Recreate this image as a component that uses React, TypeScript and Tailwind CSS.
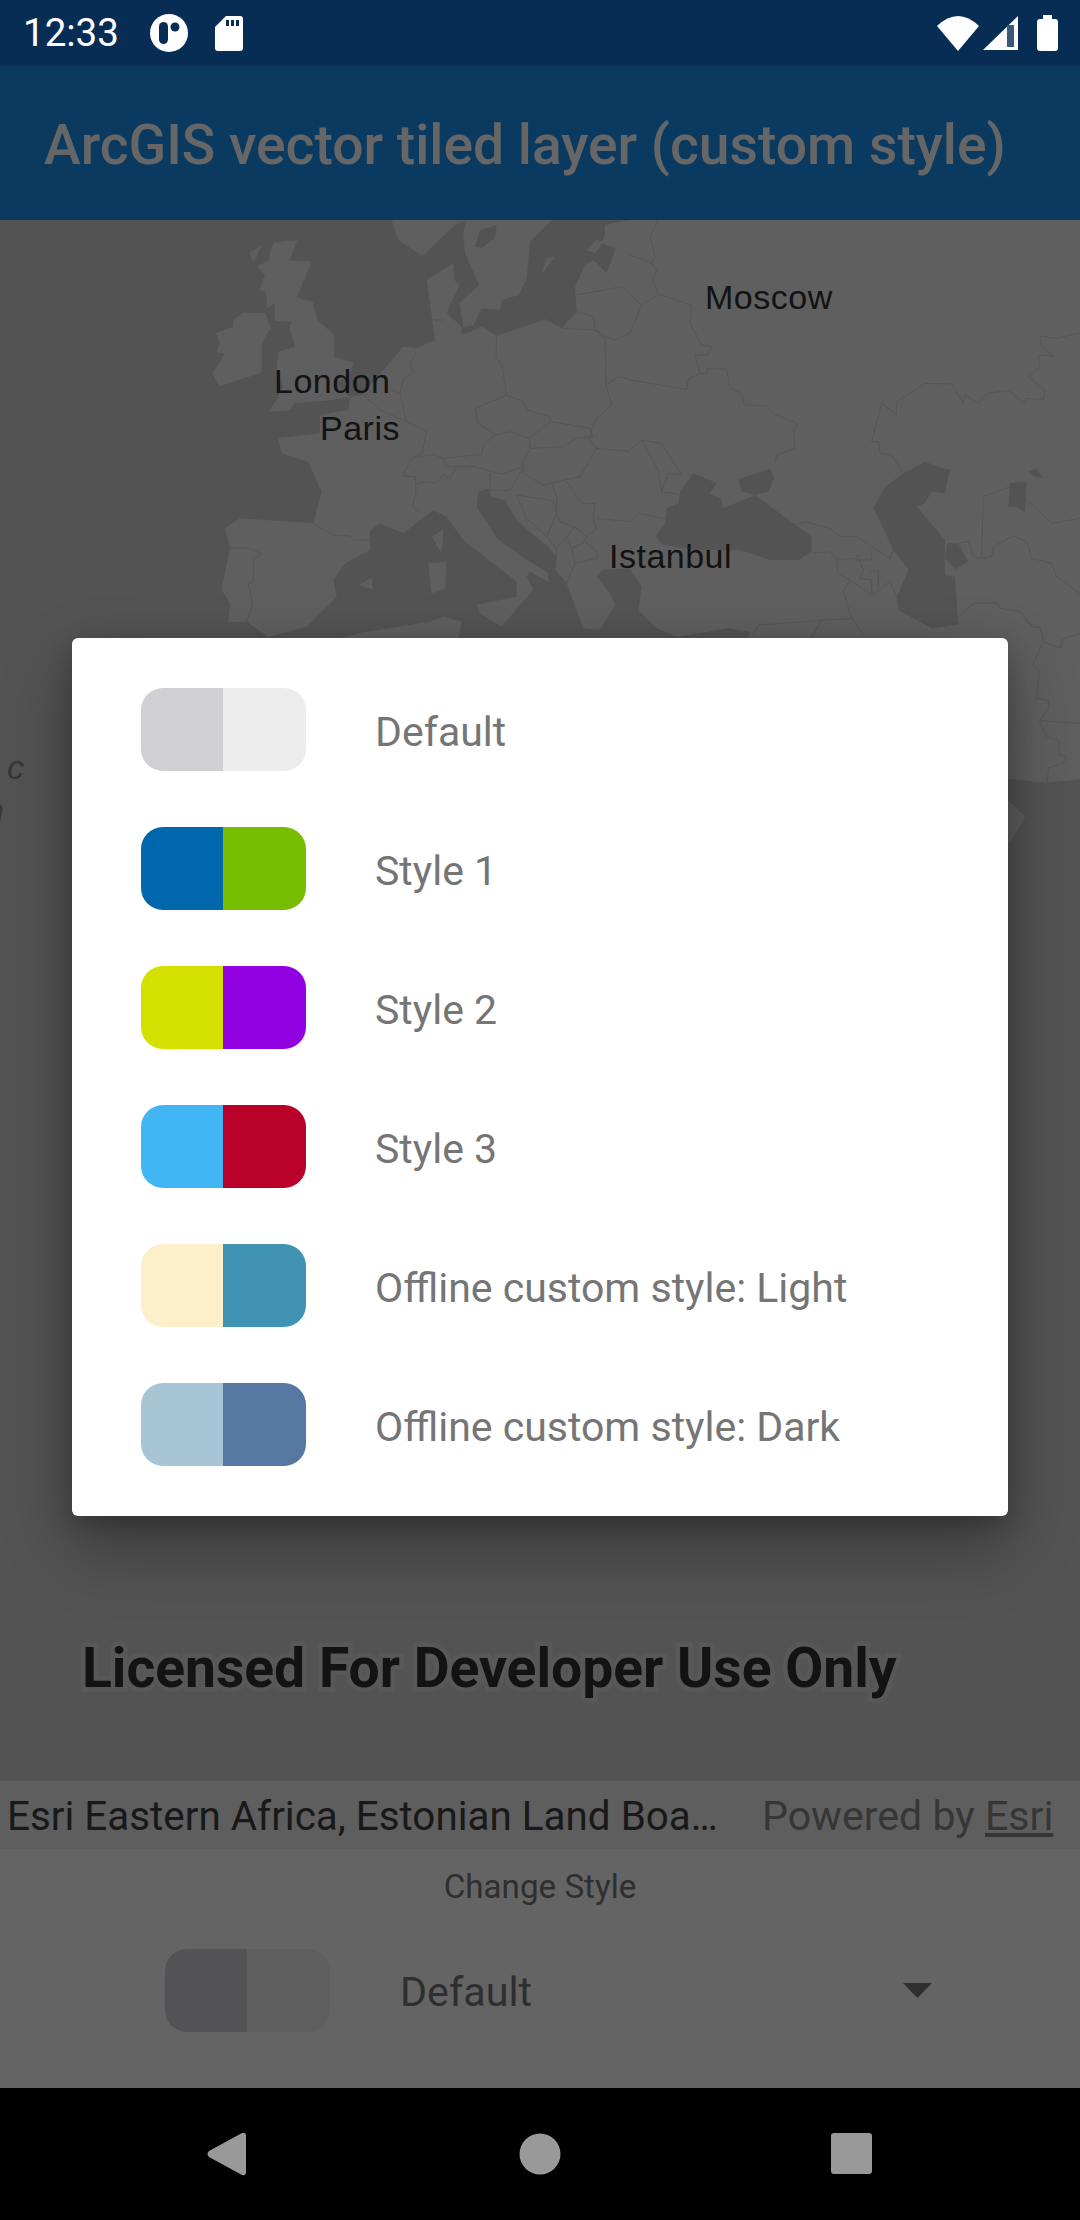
const LAND = "1275,15 1350,0 2700,0 2700,1678 2600,1688 2484,1676 2484,1300 1700,1300 1710,1235 1640,1225 1560,1240 1490,1250 1430,1225 1375,1170 1385,1100 1350,1045 1265,1050 1250,1070 1290,1120 1305,1155 1260,1230 1210,1225 1160,1090 1125,1050 1130,1010 1105,980 1060,945 1010,900 975,840 935,830 925,805 895,815 890,860 950,955 1040,1020 1105,1060 1105,1085 1050,1055 1040,1070 1060,1110 1015,1160 965,1220 900,1180 890,1155 1010,1130 1010,1085 850,960 800,890 760,870 670,940 600,910 570,930 570,990 495,1030 460,1080 470,1130 380,1220 265,1250 200,1205 145,1205 150,1150 125,1110 150,985 135,925 180,895 400,910 425,815 385,725 305,700 295,655 420,640 420,585 505,570 510,530 545,525 610,450 670,380 710,385 765,360 757,300 740,180 820,130 822,178 838,197 812,250 800,280 845,320 845,345 905,320 950,348 1095,298 1145,325 1190,275 1185,200 1215,135 1240,120 1280,160 1308,85 1262,70 1275,45";
const ISLANDS = [
  "160,300 190,278 255,280 272,325 245,370 245,458 118,498 97,460 135,402 108,395 120,370 108,340 160,320",
  "280,68 352,60 328,122 395,125 350,232 398,245 412,300 462,345 462,410 520,428 505,470 460,490 510,530 455,540 345,550 330,570 265,575 295,530 310,500 290,445 295,395 345,380 328,320 335,305 285,302 283,250 262,265 258,215 238,210 255,165 232,140 265,120",
  "207,100 245,75 222,125",
  "635,0 860,0 825,15 727,108 655,60",
  "860,0 1115,0 1050,65 1040,175 1015,225 965,240 960,270 905,265 880,315 850,320 838,250 898,195 855,100 850,40",
  "1085,160 1100,115 1125,110",
  "1220,90 1248,60 1270,65 1245,100",
  "755,950 790,930 785,1000",
  "745,1030 800,1025 795,1105 755,1120",
  "537,1095 575,1075 578,1108",
  "460,1300 480,1254 560,1235 750,1205 790,1190 845,1205 825,1300",
  "2484,1740 2535,1790 2490,1870 2450,1870 2450,1740",
];
const LAKES = ["885,80 900,30 950,15 945,55 905,85"];
const SEAS = [
  "190,760 262,790 238,820 272,835 280,865 375,825 545,950 545,995 505,1020 420,1020 330,990 200,990 100,975 75,950 105,910 110,865 145,850 150,815",
  "325,778 420,745 433,775 415,815 375,825 335,815",
  "885,725 925,740 960,750 945,820 905,815 885,850 860,860 945,960 945,1065 975,1070 985,1215 905,1225 805,1170 800,1130 835,1050 790,990 758,920 730,865 765,800 820,760",
  "950,970 985,970 1015,1025 975,1048 945,1015",
  "1140,790 1190,785 1185,880 1160,860 1135,860",
  "1195,755 1220,745 1240,775 1215,770",
];
const BORDERS_W = [
  "150,985 200,983 245,1000 220,1020 220,1085 205,1090 218,1155 200,1205",
  "400,912 460,945 510,948 525,960 570,960",
  "545,520 600,570 680,605 740,635 725,700 695,715 668,768 705,770 708,815 698,860 725,880",
  "695,715 760,703 790,715 905,703 910,675 945,645 990,635 1048,655 1050,685 1030,725 1028,740 965,762 880,740 800,740 790,715",
  "705,793 745,785 770,790 790,765 810,775 830,742",
  "710,395 690,435 700,458 668,480 660,520 680,605",
  "635,510 660,520",
  "755,300 790,300",
  "950,348 948,415 965,430 980,525 885,565 895,610 945,645",
  "980,525 1030,545 1040,570 1110,590 1112,605 1048,655",
  "1112,605 1230,625 1240,650 1190,655 1150,680 1050,685",
  "1145,325 1250,330 1275,360 1278,495 1295,555 1250,595 1235,630 1230,658 1250,685 1350,695",
  "1278,495 1315,470 1350,478",
  "1030,725 1030,760 1090,795 1200,770 1250,685",
  "930,760 930,810 990,812 1028,745",
  "1010,825 1120,842 1130,880 1100,950 1040,895 1010,825",
  "1090,795 1115,790 1130,830 1130,880 1140,905 1190,925 1220,950 1250,925 1240,900 1245,850 1205,850 1160,785",
  "1250,895 1350,905",
  "1100,950 1130,985 1160,950 1185,920 1220,950 1210,970 1175,985 1160,950",
  "1175,985 1185,1030 1250,1015 1255,1000 1215,965",
  "1130,985 1125,1050 1160,1090 1185,1030",
  "1190,225 1325,200 1350,220",
  "1245,325 1240,290 1190,275",
  "1250,330 1275,350 1305,360 1350,340",
];
const BORDERS_E = [
  "85,0 60,50 75,110 65,130 0,105",
  "65,130 80,150 68,180 85,222 35,255 0,340",
  "0,225 35,255",
  "85,222 185,255 180,310 215,375 245,380 230,405 195,405 210,460 230,462 232,447 290,447 300,505 335,520 342,555 410,557 430,580 505,612 490,630 495,685 440,705 435,730",
  "0,480 170,508 175,478 210,460",
  "0,690 35,660 95,670 155,765 115,760 95,815 85,750 35,660",
  "95,815 145,822",
  "0,905 25,880 105,897",
  "800,760 815,750 785,705 750,700 745,665 725,665 755,550 800,585 800,545 885,490 965,492 1000,550 1005,525 1045,550 1070,520 1135,512 1185,550 1190,535 1240,540 1245,510 1195,470 1230,440 1225,405 1270,408 1235,380 1230,348 1280,355 1350,338",
  "1055,1010 1060,830 1140,800",
  "1185,835 1265,910 1350,895",
  "985,970 1015,965 1030,1010 1055,1015 1085,1010 1090,980 1150,947 1190,965 1205,1015 1265,1030 1280,1070 1350,1120",
  "985,1190 1030,1150 1100,1148 1110,1165 1170,1175 1205,1220 1230,1220 1240,1260",
  "500,915 525,905 600,925 630,950 680,950 780,1015 790,990",
  "545,1000 600,995 620,1020 670,1015 675,1020 725,1020 720,985",
  "620,1020 625,1060 660,1080 725,1125 780,1085 800,1130",
  "660,1080 640,1115 665,1195 710,1260",
  "385,1215 665,1195 575,1200 540,1260",
  "360,1260 385,1215",
  "680,1005 700,1050 690,1075 725,1080 725,1125",
  "720,1055 745,1050 745,1100",
];
const BORDERS_R = [
  "135,0 160,20 182,25 190,65 240,85 250,55 300,40",
  "190,65 158,135 178,150 170,235 203,240 208,265 178,302 300,310",
  "178,302 200,350 237,362 237,405 258,407 250,430 207,443 200,488",
];

const LANDC = "#eeeeee";
const WATER = "#d0d0d2";
const LINE = "#d4d4d4";

function MapArt() {
  return (
    <svg viewBox="-540 0 3240 4683" className="absolute inset-0 h-full w-full" preserveAspectRatio="none">
      <rect x="-540" y="0" width="3240" height="4683" fill={WATER} />
      <polygon points={LAND} fill={LANDC} />
      {ISLANDS.map((p, i) => <polygon key={i} points={p} fill={LANDC} />)}
      {LAKES.map((p, i) => <polygon key={i} points={p} fill={WATER} />)}
      <g transform="translate(1350 0)">
        {SEAS.map((p, i) => <polygon key={i} points={p} fill={WATER} />)}
      </g>
      <g fill="none" stroke={LINE} strokeWidth="3">
        {BORDERS_W.map((p, i) => <polyline key={i} points={p} />)}
        <g transform="translate(1350 0)">
          {BORDERS_E.map((p, i) => <polyline key={i} points={p} />)}
        </g>
        <g transform="translate(2400 1200)">
          {BORDERS_R.map((p, i) => <polyline key={i} points={p} />)}
        </g>
      </g>
    </svg>
  );
}

function Swatch({ a, b }: { a: string; b: string }) {
  return (
    <div className="flex h-[83px] w-[165px] shrink-0 overflow-hidden rounded-[22px]">
      <div className="w-[82px]" style={{ backgroundColor: a }} />
      <div className="flex-1" style={{ backgroundColor: b }} />
    </div>
  );
}

const OPTIONS = [
  { label: "Default", a: "#d0d0d4", b: "#ececed" },
  { label: "Style 1", a: "#0067ac", b: "#77bd00" },
  { label: "Style 2", a: "#d3e000", b: "#9000e0" },
  { label: "Style 3", a: "#42b6f5", b: "#b90028" },
  { label: "Offline custom style: Light", a: "#fdefca", b: "#4193b4" },
  { label: "Offline custom style: Dark", a: "#a8c5d5", b: "#5577a1" },
];

function StatusBar() {
  return (
    <div className="flex h-[66px] shrink-0 items-center bg-[#082d54] text-white">
      <span className="ml-[23px] text-[38.5px] leading-none">12:33</span>
      <svg width="38" height="38" viewBox="0 0 38 38" className="ml-[31px]">
        <circle cx="19" cy="19" r="19" fill="#fff" />
        <rect x="9" y="8" width="9" height="22" rx="4.5" fill="#082d54" />
        <circle cx="25" cy="13" r="4.5" fill="#082d54" />
      </svg>
      <svg width="28" height="35" viewBox="0 0 28 35" className="ml-[27px]">
        <path d="M11 0H25a3 3 0 0 1 3 3V32a3 3 0 0 1-3 3H3a3 3 0 0 1-3-3V11Z" fill="#fff" />
        <rect x="11" y="4" width="3" height="6" fill="#082d54" />
        <rect x="16" y="4" width="3" height="6" fill="#082d54" />
        <rect x="21" y="4" width="3" height="6" fill="#082d54" />
      </svg>
      <div className="flex-1" />
      <svg width="42" height="35" viewBox="0 0 42 35">
        <path d="M0 10Q21-10 42 10L21 35Z" fill="#fff" />
      </svg>
      <svg width="35" height="34" viewBox="0 0 35 34" className="ml-[4px]">
        <path d="M35 0V34H0Z" fill="#fff" />
        <path d="M24 9H31V31H24Z" fill="#3a5878" />
      </svg>
      <svg width="21" height="36" viewBox="0 0 21 36" className="ml-[19px] mr-[22px]">
        <path d="M6 0H15V4H18a3 3 0 0 1 3 3V33a3 3 0 0 1-3 3H3a3 3 0 0 1-3-3V7a3 3 0 0 1 3-3H6Z" fill="#fff" />
      </svg>
    </div>
  );
}

function NavBar() {
  return (
    <div className="relative flex h-[132px] shrink-0 items-center justify-center bg-black">
      <svg width="666" height="44" viewBox="0 0 666 44">
        <path d="M2 19L35 1Q39 0 39 4V40Q39 44 35 43L2 25Q-1 22 2 19Z" fill="#999" />
        <circle cx="333" cy="22" r="20.5" fill="#999" />
        <rect x="624" y="1" width="41" height="41" rx="3" fill="#999" />
      </svg>
    </div>
  );
}

export default function App() {
  return (
    <div className="flex h-[2220px] w-[1080px] flex-col overflow-hidden bg-black font-['Roboto',sans-serif]">
      <StatusBar />
      <div className="relative flex min-h-0 flex-1 flex-col">
        <div className="flex h-[154px] shrink-0 items-center bg-[#1c91f0] pl-[44px] pt-[5px]">
          <span className="text-[55.25px] font-medium leading-none text-white">ArcGIS vector tiled layer (custom style)</span>
        </div>
        <div className="relative min-h-0 flex-1 overflow-hidden">
          <MapArt />
          <span className="absolute left-[705px] top-[57px] font-['Liberation_Sans',sans-serif] text-[34px] leading-[40px] tracking-[0.5px] text-[#303030]">Moscow</span>
          <span className="absolute left-[274px] top-[141px] font-['Liberation_Sans',sans-serif] text-[34px] leading-[40px] tracking-[0.5px] text-[#303030]">London</span>
          <span className="absolute left-[320px] top-[188px] font-['Liberation_Sans',sans-serif] text-[34px] leading-[40px] tracking-[0.5px] text-[#303030]">Paris</span>
          <span className="absolute left-[609px] top-[316px] font-['Liberation_Sans',sans-serif] text-[34px] leading-[40px] tracking-[0.5px] text-[#303030]">Istanbul</span>
          <span className="absolute left-[7px] top-[527px] font-['Liberation_Sans',sans-serif] text-[34px] italic leading-[40px] text-[#8a8a8c]">c</span>
          <span className="absolute left-[-15px] top-[570px] font-['Liberation_Sans',sans-serif] text-[34px] italic leading-[40px] text-[#8a8a8c]">n</span>
          <div className="absolute left-[82px] top-[1418px] text-[55.2px] font-bold leading-[60px] text-[#303030] [-webkit-text-stroke:9px_#dddddd] [paint-order:stroke_fill]">Licensed For Developer Use Only</div>
        </div>
        <div className="flex h-[68px] shrink-0 items-center bg-[#ececec] pl-[7px] pt-[4px]">
          <span className="w-[755px] shrink-0 text-[40.4px] leading-none text-[#404040]">Esri Eastern Africa, Estonian Land Boa…</span>
          <span className="text-[41.1px] leading-none text-[#888888]">Powered by <span className="underline">Esri</span></span>
        </div>
        <div className="flex h-[239px] shrink-0 flex-col bg-[#fafafa]">
          <div className="mt-[18px] text-center text-[33.2px] leading-[39px] text-[#757575]">Change Style</div>
          <div className="mt-[43px] flex items-center pl-[165px]">
            <Swatch a="#d0d0d4" b="#ececed" />
            <span className="ml-[70px] pt-[4px] text-[41.25px] leading-none text-[#757575]">Default</span>
            <svg width="29" height="15" viewBox="0 0 29 15" className="ml-auto mr-[148px]">
              <path d="M0 0H29L14.5 15Z" fill="#757575" />
            </svg>
          </div>
        </div>
        <div className="absolute inset-0 bg-black/60" />
        <div className="absolute left-[72px] top-[572px] w-[936px] rounded-[6px] bg-white py-[22px] shadow-[0_30px_70px_rgba(0,0,0,0.32),0_8px_24px_rgba(0,0,0,0.2)]">
          {OPTIONS.map((o) => (
            <div key={o.label} className="flex h-[139px] items-center pl-[69px]">
              <Swatch a={o.a} b={o.b} />
              <span className="ml-[69px] pt-[5px] text-[41px] leading-none text-[#757575]">{o.label}</span>
            </div>
          ))}
        </div>
      </div>
      <NavBar />
    </div>
  );
}
